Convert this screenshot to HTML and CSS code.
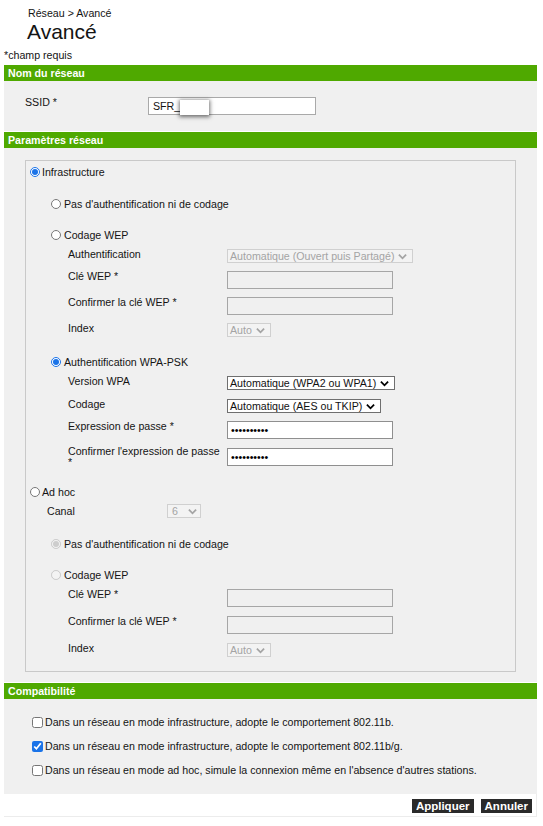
FILE: index.html
```html
<!DOCTYPE html>
<html lang="fr">
<head>
<meta charset="utf-8">
<title>Avancé</title>
<link rel="stylesheet" href="styles.css">
</head>
<body>
<div class="crumb">Réseau &gt; Avancé</div>
<h1 class="title">Avancé</h1>
<div class="req">*champ requis</div>

<section class="section">
  <div class="bar">Nom du réseau</div>
  <div class="panel panel-ssid">
    <div class="ssid-row">
      <span class="ssid-label">SSID *</span>
      <div class="field ssid-field">SFR_<span class="redact"></span></div>
    </div>
  </div>
</section>

<section class="section">
  <div class="bar">Paramètres réseau</div>
  <div class="panel panel-net">
    <div class="box">
      <label class="rrow r-infra"><input type="radio" name="mode" checked>Infrastructure</label>
      <div class="group">
        <label class="rrow r-first"><input type="radio" name="auth">Pas d'authentification ni de codage</label>
        <label class="rrow r-next"><input type="radio" name="auth">Codage WEP</label>
        <div class="sub">
          <div class="frow h22 first"><span class="flabel">Authentification</span><span class="select dis">Automatique (Ouvert puis Partagé)<svg class="chev" viewBox="0 0 10 7"><path d="M1 1.5l4 4 4-4"/></svg></span></div>
          <div class="frow h26"><span class="flabel">Clé WEP *</span><input class="text dis" type="text"></div>
          <div class="frow h26"><span class="flabel">Confirmer la clé WEP *</span><input class="text dis" type="text"></div>
          <div class="frow h30"><span class="flabel">Index</span><span class="select dis">Auto<svg class="chev" viewBox="0 0 10 7"><path d="M1 1.5l4 4 4-4"/></svg></span></div>
        </div>
        <label class="rrow"><input type="radio" name="auth" checked>Authentification WPA-PSK</label>
        <div class="sub">
          <div class="frow h23 first"><span class="flabel">Version WPA</span><span class="select">Automatique (WPA2 ou WPA1)<svg class="chev" viewBox="0 0 10 7"><path d="M1 1.5l4 4 4-4"/></svg></span></div>
          <div class="frow h22"><span class="flabel">Codage</span><span class="select">Automatique (AES ou TKIP)<svg class="chev" viewBox="0 0 10 7"><path d="M1 1.5l4 4 4-4"/></svg></span></div>
          <div class="frow h27"><span class="flabel">Expression de passe *</span><input class="text" type="password" value="abcdefghij"></div>
          <div class="frow h27"><span class="flabel wrap">Confirmer l'expression de passe *</span><input class="text" type="password" value="abcdefghij"></div>
        </div>
      </div>
      <label class="rrow r-adhoc"><input type="radio" name="mode">Ad hoc</label>
      <div class="canal-row"><span class="canal-label">Canal</span><span class="select dis sel-canal">6<svg class="chev" viewBox="0 0 10 7"><path d="M1 1.5l4 4 4-4"/></svg></span></div>
      <div class="group">
        <label class="rrow"><input type="radio" name="auth2" checked disabled>Pas d'authentification ni de codage</label>
        <label class="rrow r-next"><input type="radio" name="auth2" disabled>Codage WEP</label>
        <div class="sub">
          <div class="frow h27 first"><span class="flabel">Clé WEP *</span><input class="text dis" type="text"></div>
          <div class="frow h27"><span class="flabel">Confirmer la clé WEP *</span><input class="text dis" type="text"></div>
          <div class="frow h15"><span class="flabel">Index</span><span class="select dis">Auto<svg class="chev" viewBox="0 0 10 7"><path d="M1 1.5l4 4 4-4"/></svg></span></div>
        </div>
      </div>
    </div>
  </div>
</section>

<section class="section">
  <div class="bar">Compatibilité</div>
  <div class="panel panel-compat">
    <label class="crow"><input type="checkbox">Dans un réseau en mode infrastructure, adopte le comportement 802.11b.</label>
    <label class="crow"><input type="checkbox" checked>Dans un réseau en mode infrastructure, adopte le comportement 802.11b/g.</label>
    <label class="crow"><input type="checkbox">Dans un réseau en mode ad hoc, simule la connexion même en l'absence d'autres stations.</label>
  </div>
  <div class="footer">
    <button class="btn" type="button">Appliquer</button>
    <button class="btn" type="button">Annuler</button>
  </div>
</section>
</body>
</html>
```

FILE: styles.css
```css
* { box-sizing: border-box; }

body {
  margin: 0;
  width: 543px;
  background: #fff;
  color: #141414;
  font-family: "Liberation Sans", Arial, sans-serif;
  font-size: 10.65px;
  line-height: 13px;
}

.crumb {
  padding: 7px 0 0 28px;
  line-height: 13px;
}

.title {
  margin: 0;
  padding-left: 27px;
  font-size: 21px;
  font-weight: normal;
  line-height: 24px;
}

.req {
  margin-top: 5px;
  padding-left: 4px;
  line-height: 13px;
}

.section {
  width: 533px;
  margin: 3px 0 0 4px;
}
.section + .section { margin-top: 1px; }

.bar {
  height: 16px;
  line-height: 16px;
  padding-left: 4px;
  background: #4fa900;
  color: #fff;
  font-weight: bold;
}

.panel { background: #f0f0f0; }

/* SSID */
.panel-ssid { padding: 15px 0 16px 21px; }
.ssid-row { display: flex; align-items: flex-start; height: 19px; }
.ssid-label { width: 123px; line-height: 13px; }
.field {
  margin-top: 1px;
  height: 18px;
  background: #fff;
  border: 1px solid #a9a9a9;
  padding: 0 4px;
  line-height: 16px;
  display: flex;
  align-items: center;
}
.ssid-field { width: 168px; }
.redact {
  display: inline-block;
  width: 29px;
  height: 15px;
  margin: 3px 0 0 0;
  background: #fff;
  box-shadow: 0 1px 4px 1px rgba(0,0,0,0.55);
}

/* Network */
.panel-net { padding: 12px 21px 10px 21px; }
.box {
  border: 1px solid #c9c9c9;
  padding: 0 0 14px 4px;
}

.rrow {
  display: flex;
  align-items: center;
  height: 20px;
}
.rrow input {
  width: 10px;
  height: 10px;
  margin: 0 2px 0 0;
  accent-color: #1a73e8;
}
.group .rrow input { margin-right: 3px; }
.r-infra { margin-top: 1px; }
.r-first { margin-top: 12px; }
.r-next { margin-top: 11px; }
.r-adhoc { margin-top: 8px; }

.group { padding-left: 21px; }
.sub { padding-left: 17px; }

.frow {
  display: flex;
  align-items: flex-start;
}
.frow.first { margin-top: 3px; }
.h15 { height: 15px; }
.h22 { height: 22px; }
.h23 { height: 23px; }
.h26 { height: 26px; }
.h27 { height: 27px; }
.h30 { height: 30px; }

.flabel {
  width: 159px;
  flex: none;
  padding-right: 4px;
  line-height: 13px;
}
.flabel.wrap { line-height: 11px; margin-top: -1px; }

.select {
  margin-top: 1px;
  display: inline-flex;
  align-items: center;
  height: 14px;
  padding: 0 5px 0 2px;
  background: #fff;
  border: 1px solid #6f6f6f;
  color: #111;
  line-height: 12px;
  white-space: nowrap;
}
.select.dis {
  background: #f3f3f3;
  border-color: #d0d0d0;
  color: #a4a4a4;
}
.chev {
  width: 9px;
  height: 7px;
  margin-left: 4px;
  fill: none;
  stroke: currentColor;
  stroke-width: 2;
}
.select:not(.dis) .chev { stroke: #000; }

.text {
  margin: 1px 0 0 0;
  width: 166px;
  height: 18px;
  padding: 0 3px;
  background: #fff;
  border: 1px solid #8f8f8f;
  border-radius: 0;
  font-family: "Liberation Sans", Arial, sans-serif;
  font-size: 10.65px;
  color: #000;
  outline: none;
}
.text.dis {
  background: #f0f0f0;
  border-color: #a6a6a6;
}

.canal-row {
  display: flex;
  align-items: flex-start;
  height: 30px;
  margin-top: 2px;
  padding-left: 17px;
}
.canal-label { width: 120px; line-height: 13px; margin-top: 1px; }
.sel-canal { margin-top: 0; padding: 0 3px 0 4px; }
.sel-canal .chev { margin-left: 10px; }

/* Compat */
.panel-compat { padding: 11px 0 12px 28px; }
.crow {
  display: flex;
  align-items: center;
  height: 24px;
}
.crow input {
  width: 11px;
  height: 11px;
  margin: 0 2px 0 0;
  accent-color: #1a73e8;
}

.footer {
  display: flex;
  justify-content: flex-end;
  gap: 7px;
  height: 23px;
  padding: 5px 4px 0 0;
  border-right: 1px solid #ececec;
  border-bottom: 1px solid #ececec;
}
.btn {
  height: 14px;
  padding: 0 4px;
  border: 0;
  border-radius: 0;
  background: #2a2a2a;
  color: #fff;
  font-family: "Liberation Sans", Arial, sans-serif;
  font-size: 11.5px;
  font-weight: bold;
  line-height: 14px;
}
```
